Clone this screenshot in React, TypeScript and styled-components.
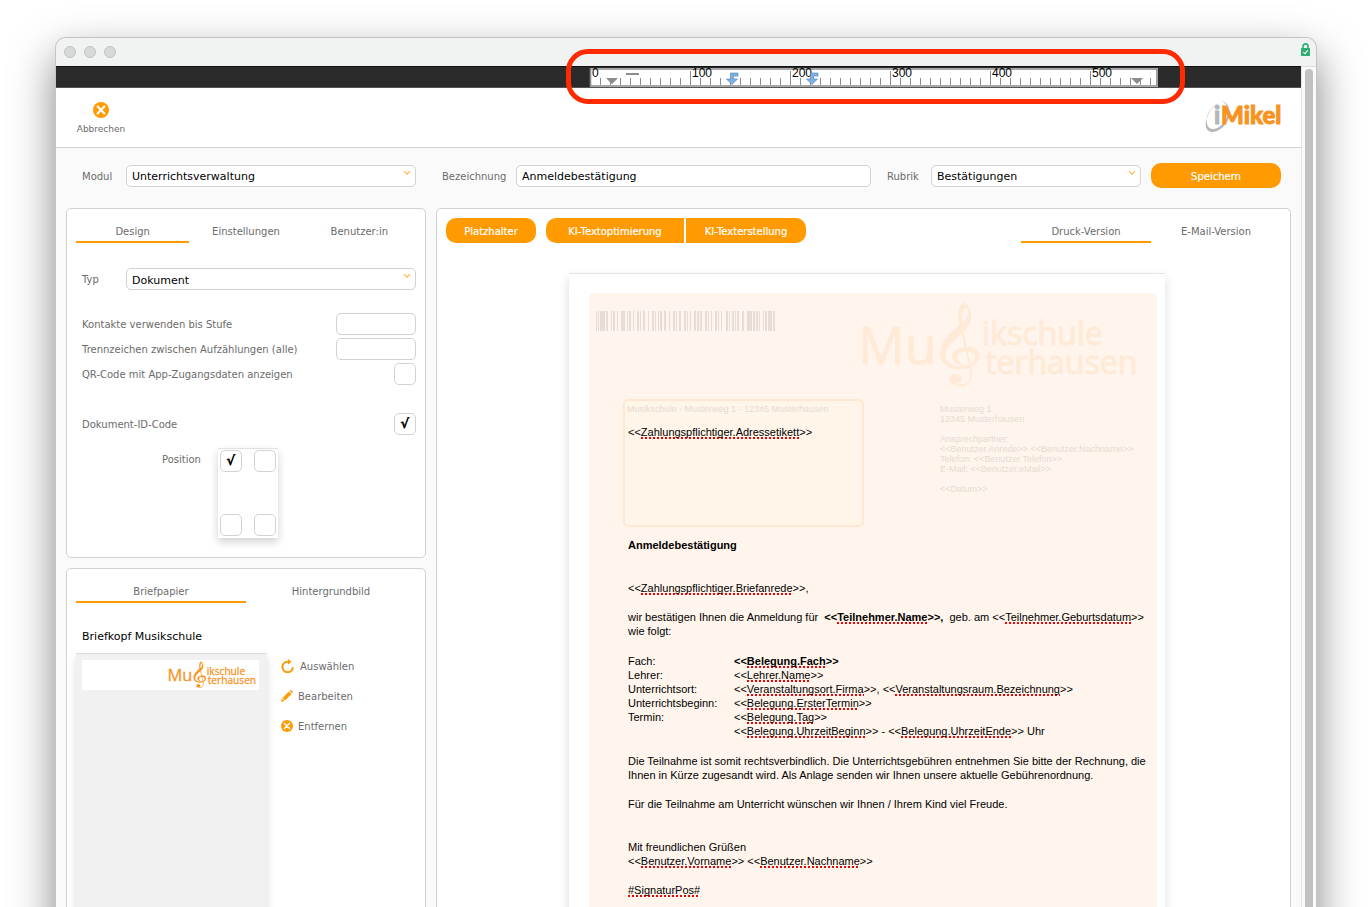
import React from "react";
import styled, { createGlobalStyle, css } from "styled-components";

const ORANGE = "#ff9a00";
const LINE = "#d2d2d2";
const UI_FONT = `"DejaVu Sans", Verdana, sans-serif`;
const DOC_FONT = `"Liberation Sans", Arial, sans-serif`;

const GlobalStyle = createGlobalStyle`
  *, *::before, *::after { box-sizing: border-box; }
  body { margin: 0; background: #fff; color: #6b6b6b; font: 10px/14px ${UI_FONT}; }
  button, input, select { font-family: inherit; margin: 0; }
`;

const Desktop = styled.div`
  height: 100vh;
  overflow: hidden;
  padding: 38px 56px 0;
`;

const Window = styled.div`
  height: 100vh;
  display: flex;
  flex-direction: column;
  border-radius: 10px 10px 0 0;
  background: #fafafa;
  box-shadow: 0 0 0 1px #c4c4c4, 0 18px 44px rgba(0, 0, 0, 0.5);
`;

const TitleBar = styled.header`
  height: 28px;
  flex: none;
  display: flex;
  align-items: center;
  justify-content: space-between;
  padding: 0 6px 0 8px;
  border-radius: 10px 10px 0 0;
  background: #f0f3f2;
`;

const Lights = styled.div`
  display: flex;
  gap: 8px;
`;

const Light = styled.span`
  width: 12px;
  height: 12px;
  border-radius: 50%;
  border: 1px solid #c3c5c4;
  background: #d7d9d8;
`;

const LockBadge = styled.span`
  display: flex;
  padding-bottom: 6px;
`;

const WindowBody = styled.div`
  flex: 1;
  min-height: 0;
  display: flex;
`;

const Content = styled.div`
  flex: 1;
  min-width: 0;
  display: flex;
  flex-direction: column;
`;

const ScrollTrack = styled.div`
  width: 15px;
  padding: 2px 3px 0 3px;
  border-left: 1px solid #e4e4e4;
  border-top: 1px solid #dcdcdc;
  background: #fafafa;
`;

const ScrollThumb = styled.div`
  width: 8px;
  height: 100%;
  border-radius: 4px;
  background: #c1c1c1;
`;

const RulerBar = styled.div`
  height: 22px;
  flex: none;
  padding: 1px 0 0 534px;
  border-top: 1px solid #111;
  border-bottom: 1px solid #555;
  background: #2b2b2b;
`;

const RulerHolder = styled.div`
  position: relative;
  width: 568px;
  height: 19px;

  svg { overflow: visible; }
`;

const Highlight = styled.div`
  position: absolute;
  inset: -19px -27px -17px -24px;
  border: 5px solid #ff2a00;
  border-radius: 22px;
`;

const AppHeader = styled.div`
  flex: none;
  height: 60px;
  display: flex;
  align-items: center;
  justify-content: space-between;
  padding: 0 18px 0 16px;
  border-bottom: 1px solid ${LINE};
  background: #fff;
`;

const CancelButton = styled.button`
  display: flex;
  flex-direction: column;
  align-items: center;
  gap: 4px;
  width: 58px;
  padding: 2px 0 0;
  border: 0;
  background: none;
  color: #6b6b6b;
  font-size: 9px;
  line-height: 14px;
`;

const FormBar = styled.div`
  flex: none;
  display: flex;
  align-items: center;
  padding: 15px 20px 20px 26px;
`;

const Label = styled.label<{ $width?: number }>`
  flex: none;
  width: ${(p) => (p.$width ? `${p.$width}px` : "auto")};
  padding-top: 2px;
`;

const field = css`
  height: 22px;
  border: 1px solid ${LINE};
  border-radius: 5px;
  background: #fff;
  color: #000;
  font-size: 11px;
  outline: none;
`;

const TextInput = styled.input`
  ${field}
  min-width: 0;
  flex: 1;
  padding: 2px 5px 0;
`;

const SmallInput = styled.input`
  ${field}
  width: 80px;
  padding: 2px 5px 0;
`;

const SelectHolder = styled.span<{ $width?: number }>`
  position: relative;
  display: flex;
  flex: ${(p) => (p.$width ? "none" : "1")};
  width: ${(p) => (p.$width ? `${p.$width}px` : "auto")};

  select {
    ${field}
    width: 100%;
    appearance: none;
    padding: 2px 20px 0 5px;
  }

  svg {
    position: absolute;
    top: 5px;
    right: 5px;
    pointer-events: none;
  }
`;

const Spacer = styled.span<{ $width: number }>`
  flex: none;
  width: ${(p) => p.$width}px;
`;

const OrangeButton = styled.button<{ $width: number; $side?: "left" | "right" }>`
  width: ${(p) => p.$width}px;
  height: 25px;
  padding: 1px 0 0;
  border: 0;
  border-radius: ${(p) =>
    p.$side === "left" ? "10px 0 0 10px" : p.$side === "right" ? "0 10px 10px 0" : "10px"};
  background: ${ORANGE};
  color: #fff;
  font-size: 10px;
  -webkit-text-stroke: 0.2px #fff;
`;

const Main = styled.main`
  flex: 1;
  min-height: 0;
  display: flex;
  gap: 10px;
  padding: 0 10px;
`;

const Sidebar = styled.div`
  flex: none;
  width: 360px;
  display: flex;
  flex-direction: column;
  gap: 10px;
`;

const Panel = styled.section<{ $grow?: boolean }>`
  flex: ${(p) => (p.$grow ? "1" : "none")};
  min-width: 0;
  padding: 9px;
  border: 1px solid ${LINE};
  border-radius: 5px;
  background: #fff;
`;

const Tabs = styled.div<{ $width?: number }>`
  display: flex;
  width: ${(p) => (p.$width ? `${p.$width}px` : "auto")};
`;

const Tab = styled.button<{ $active?: boolean }>`
  flex: 1 1 0;
  height: 25px;
  padding: 4px 0 0;
  border: 0;
  border-bottom: 2px solid ${(p) => (p.$active ? ORANGE : "transparent")};
  background: none;
  color: #6b6b6b;
  font-size: 10px;
`;

const Settings = styled.div`
  display: flex;
  flex-direction: column;
  gap: 3px;
  padding: 25px 0 10px 6px;
`;

const SettingRow = styled.div<{ $after?: number }>`
  display: flex;
  align-items: center;
  justify-content: space-between;
  min-height: 22px;
  margin-bottom: ${(p) => p.$after ?? 0}px;
`;

const PositionRow = styled.div`
  display: flex;
  gap: 17px;
  padding: 10px 0 0 80px;
`;

const PositionLabel = styled.span`
  padding-top: 5px;
`;

const PositionPage = styled.div`
  width: 60px;
  height: 90px;
  display: flex;
  flex-wrap: wrap;
  align-content: space-between;
  justify-content: space-between;
  padding: 1px 2px 2px;
  border-top: 1px solid #e0e0e0;
  background: #fff;
  box-shadow: 0 4px 8px rgba(0, 0, 0, 0.18);
`;

const Check = styled.input`
  ${field}
  appearance: none;
  display: grid;
  place-items: center;
  width: 22px;

  &:checked::after {
    content: "√";
    font: 13px/18px ${UI_FONT};
    -webkit-text-stroke: 0.7px #000;
    color: #000;
  }
`;

const PaperTitle = styled.h2`
  margin: 27px 6px 9px;
  color: #000;
  font-size: 11px;
  line-height: 14px;
  font-weight: 400;
`;

const PaperRow = styled.div`
  display: flex;
  gap: 14px;
`;

const Preview = styled.div`
  width: 191px;
  height: 360px;
  padding: 6px 8px 6px 6px;
  border-top: 1px solid #dcdcdc;
  background: #f1f1f1;
  box-shadow: 0 4px 8px rgba(0, 0, 0, 0.14);
`;

const Letterhead = styled.div`
  display: flex;
  align-items: flex-end;
  justify-content: flex-end;
  height: 30px;
  padding-right: 2px;
  background: #fff;
`;

const Actions = styled.div`
  display: flex;
  flex-direction: column;
  gap: 16px;
  padding-top: 6px;
`;

const Action = styled.button`
  display: flex;
  align-items: center;
  gap: 5px;
  height: 14px;
  padding: 0;
  border: 0;
  background: none;
  color: #6b6b6b;
  font-size: 10px;
`;

const EditorBar = styled.div`
  display: flex;
`;

const Push = styled.span`
  flex: 1;
`;

const Sheet = styled.article`
  width: 596px;
  margin: 30px 0 0 123px;
  padding: 19px 8px 0 20px;
  border-top: 1px solid #e4e4e4;
  background: #fff;
  box-shadow: 0 5px 10px rgba(0, 0, 0, 0.14);
`;

const Canvas = styled.div`
  height: 700px;
  border-radius: 5px;
  background: #fff5ec;
  color: #000;
  font: 11px/14px ${DOC_FONT};
`;

const LetterTop = styled.div`
  display: flex;
  justify-content: space-between;
  height: 106px;
  padding: 5px 17px 0 7px;
`;

const BarcodeHolder = styled.div`
  padding-top: 13px;
`;

const AddressRow = styled.div`
  display: flex;
  gap: 76px;
  padding-left: 34px;
`;

const AddressBox = styled.div`
  width: 241px;
  height: 128px;
  padding: 3px 3px 0 2px;
  border: 2px solid #ffe8d3;
  border-radius: 5px;
  background: #fff5e9;
`;

const Faint = styled.div`
  color: #e6dbd1;
  font-size: 9px;
  line-height: 10px;
  white-space: pre;
`;

const SenderBlock = styled.div`
  padding-top: 5px;
`;

const AddressText = styled.p`
  margin: 11px 0 0 1px;
`;

const Letter = styled.div`
  padding: 11px 0 0 39px;
  white-space: nowrap;
`;

const Subject = styled.h1`
  margin: 0 0 29px;
  font-size: 11px;
  line-height: 14px;
`;

const Para = styled.p<{ $after?: number }>`
  margin: 0 0 ${(p) => p.$after ?? 15}px;
`;

const Details = styled.table`
  margin: 0 0 16px;
  border-collapse: collapse;

  th, td {
    padding: 0;
    text-align: left;
    font-weight: 400;
  }

  th { width: 106px; }
`;

const Misspelt = styled.span`
  padding-bottom: 1px;
  background: repeating-linear-gradient(90deg, #f00000 0 2px, transparent 2px 4px) left bottom / 100% 2px no-repeat;
`;

/* A merge field: only the name between the angle brackets is marked by the spell check. */
const Field = ({ name }: { name: string }) => (
  <>
    {"<<"}
    <Misspelt>{name}</Misspelt>
    {">>"}
  </>
);

const CircleX = ({ size }: { size: number }) => (
  <svg width={size} height={size} viewBox="0 0 16 16" aria-hidden="true">
    <circle cx="8" cy="8" r="8" fill={ORANGE} />
    <path d="M4.6 4.6 11.4 11.4M11.4 4.6 4.6 11.4" stroke="#fff" strokeWidth="2.1" strokeLinecap="round" />
  </svg>
);

const Chevron = () => (
  <svg width="8" height="6" viewBox="0 0 8 6" aria-hidden="true">
    <path d="M1 1.2 4 4.2 7 1.2" fill="none" stroke="#ffb547" strokeWidth="1.2" />
  </svg>
);

const LockIcon = () => (
  <svg width="9" height="13" viewBox="0 0 9 13" aria-hidden="true">
    <path d="M2 6V3.4a2.5 2.5 0 0 1 5 0V6" fill="none" stroke="#2fae73" strokeWidth="1.6" />
    <rect y="5" width="9" height="8" rx="0.6" fill="#2fae73" />
    <path d="M2.4 9.2 4 10.8 6.8 7.4" fill="none" stroke="#fff" strokeWidth="1.1" />
  </svg>
);

const ReloadIcon = () => (
  <svg width="14" height="14" viewBox="0 0 14 14" aria-hidden="true">
    <path d="M11.8 8.2A5.2 5.2 0 1 1 6.6 2.8H8" fill="none" stroke={ORANGE} strokeWidth="2.1" />
    <path d="M7 0 10.6 2.9 7 5.6Z" fill={ORANGE} />
  </svg>
);

const PencilIcon = () => (
  <svg width="12" height="12" viewBox="0 0 12 12" aria-hidden="true">
    <path d="M0 12 .9 8.6 3.4 11.1ZM1.5 8 8 1.5 10.5 4 4 10.5ZM8.7.9 9.3.3Q9.8-.1 10.3.3L11.7 1.7Q12.1 2.2 11.7 2.7L11.1 3.3Z" fill={ORANGE} />
  </svg>
);

const AppLogo = () => (
  <svg width="78" height="36" viewBox="0 0 78 36" role="img" aria-label="iMikel">
    <path d="M17 .5C25 4 27 13 22 22C18 28 12 32.500 6.500 32C0 31 0 24 1.500 18C1.500 25 3 29 8 29C14 29 19.500 23 22 17C24.500 10 22 4 17 .5Z" fill="#b4b6b9" />
    <path d="M1.500 18C3 11 8 5 14 3C8 6 4 11 2.300 18Z" fill="#d5d6d8" />
    <g fontFamily="Lato" fontWeight="900" fontSize="24" strokeWidth="0.9">
      <text x="9" y="24" fill="#b4b6b9" stroke="#b4b6b9">i</text>
      <text x="16" y="24" fill="#f7931e" stroke="#f7931e">Mikel</text>
    </g>
  </svg>
);

const SchoolLogo = ({ width, color }: { width: number; color: string }) => (
  <svg width={width} height={(width * 94) / 280} viewBox="0 0 280 94" role="img" aria-label="Musikschule Musterhausen">
    <g fill={color} stroke={color} strokeWidth="0.8" fontFamily="Open Sans, Noto Sans, sans-serif">
      <text x="-2" y="66" fontSize="52">Mu</text>
      <text x="122" y="47" fontSize="32">ikschule</text>
      <text x="125" y="76" fontSize="32">terhausen</text>
    </g>
    <g transform="translate(72 0) scale(0.3333)">
      <path
        fill={color}
        stroke={color}
        strokeWidth="3"
        fillRule="evenodd"
        d="M97 16C84 18 76 40 83 82C50 108 26 134 26 166C26 196 50 214 82 212C118 212 141 196 141 174C141 152 122 144 102 148C76 151 60 162 62 178C64 192 76 200 92 201C78 194 74 186 76 176C78 164 90 159 104 159C122 159 130 166 130 178C130 197 110 206 84 206C58 206 40 192 39 170C38 146 64 128 90 104C110 86 119 70 116 46C113 28 104 16 97 16ZM103 27C110 30 111 40 107 52C104 65 98 72 90 78C86 60 88 34 103 27Z"
      />
      <path d="M86 76 116 216C121 248 106 263 84 262C70 261 60 256 55 246" fill="none" stroke={color} strokeWidth="6" />
      <ellipse cx="70" cy="242" rx="19" ry="15" fill={color} />
    </g>
  </svg>
);

const BARS: Array<[number, number]> = [
  [0, 1], [2, 1], [4, 1], [5, 4], [10, 2], [15, 1], [17, 2], [21, 1], [25, 4], [31, 1], [33, 2], [37, 1],
  [41, 2], [44, 1], [47, 2], [52, 1], [56, 2], [59, 1], [62, 1], [64, 2], [68, 2], [73, 1], [77, 2], [80, 1],
  [83, 2], [88, 2], [91, 1], [94, 1], [98, 2], [101, 2], [104, 2], [109, 2], [112, 1], [115, 1], [119, 2],
  [122, 1], [125, 1], [130, 2], [133, 1], [136, 2], [139, 1], [141, 2], [146, 2], [151, 2], [153, 3], [157, 2],
  [160, 2], [163, 1], [167, 1], [169, 2], [172, 4], [177, 2],
];

const Barcode = () => (
  <svg width="180" height="20" viewBox="0 0 180 20" role="img" aria-label="Dokument-ID-Code">
    {BARS.map(([x, w]) => (
      <rect key={x} x={x} width={w} height="20" fill="#e8ddd4" />
    ))}
  </svg>
);

const TabStop = ({ x }: { x: number }) => (
  <path
    transform={`translate(${x} 4)`}
    d="M-1.500 1H6V4H1.500V7H5.500L0 12.500-5.500 7H-1.500Z"
    fill="#7fb0e4"
    stroke="#4c7fb8"
    strokeWidth="0.6"
  />
);

const Ruler = () => (
  <svg width="568" height="19" viewBox="0 0 568 19" role="img" aria-label="Lineal">
    <rect width="568" height="19" fill="#fff" />
    <path d="M0 1H567V18H0.500V1" fill="none" stroke="#8a8a8a" strokeWidth="1.600" />
    {Array.from({ length: 57 }, (_, i) => {
      const major = i % 10 === 0;
      return <rect key={i} x={i * 10} y={major ? 3 : 10} width="1" height={major ? 14 : 7} fill="#8c8c8c" />;
    })}
    {[0, 100, 200, 300, 400, 500].map((n) => (
      <text key={n} x={n + 2} y="9" fontFamily="Liberation Sans" fontSize="12" fill="#000">
        {n}
      </text>
    ))}
    <path d="M16 10H28L22 16Z M541 10H553L547 16Z M36 5H49V7H36Z" fill="#8c8c8c" />
    <TabStop x={142} />
    <TabStop x={222} />
  </svg>
);

const Select = ({ id, value, width }: { id: string; value: string; width?: number }) => (
  <SelectHolder $width={width}>
    <select id={id} defaultValue={value}>
      <option>{value}</option>
    </select>
    <Chevron />
  </SelectHolder>
);

const DETAILS: Array<[string, React.ReactNode]> = [
  ["Fach:", <b><Field name="Belegung.Fach" /></b>],
  ["Lehrer:", <Field name="Lehrer.Name" />],
  ["Unterrichtsort:", <><Field name="Veranstaltungsort.Firma" />, <Field name="Veranstaltungsraum.Bezeichnung" /></>],
  ["Unterrichtsbeginn:", <Field name="Belegung.ErsterTermin" />],
  ["Termin:", <Field name="Belegung.Tag" />],
  ["", <><Field name="Belegung.UhrzeitBeginn" /> - <Field name="Belegung.UhrzeitEnde" /> Uhr</>],
];

const SENDER = `Musterweg 1
12345 Musterhausen

Ansprechpartner:
<<Benutzer.Anrede>> <<Benutzer.Nachname>>
Telefon: <<Benutzer.Telefon>>
E-Mail: <<Benutzer.eMail>>

<<Datum>>`;

const LetterSheet = () => (
  <Sheet>
    <Canvas>
      <LetterTop>
        <BarcodeHolder>
          <Barcode />
        </BarcodeHolder>
        <SchoolLogo width={280} color="#ffe9d7" />
      </LetterTop>
      <AddressRow>
        <AddressBox>
          <Faint>Musikschule - Musterweg 1 - 12345 Musterhausen</Faint>
          <AddressText>
            <Field name="Zahlungspflichtiger.Adressetikett" />
          </AddressText>
        </AddressBox>
        <SenderBlock>
          <Faint>{SENDER}</Faint>
        </SenderBlock>
      </AddressRow>
      <Letter>
        <Subject>Anmeldebestätigung</Subject>
        <Para>
          <Field name="Zahlungspflichtiger.Briefanrede" />,
        </Para>
        <Para $after={16}>
          wir bestätigen Ihnen die Anmeldung für&nbsp;{" "}
          <b>
            <Field name="Teilnehmer.Name" />,
          </b>
          &nbsp; geb. am <Field name="Teilnehmer.Geburtsdatum" />
          <br />
          wie folgt:
        </Para>
        <Details>
          <tbody>
            {DETAILS.map(([label, value], i) => (
              <tr key={i}>
                <th scope="row">{label}</th>
                <td>{value}</td>
              </tr>
            ))}
          </tbody>
        </Details>
        <Para>
          Die Teilnahme ist somit rechtsverbindlich. Die Unterrichtsgebühren entnehmen Sie bitte der Rechnung, die
          <br />
          Ihnen in Kürze zugesandt wird. Als Anlage senden wir Ihnen unsere aktuelle Gebührenordnung.
        </Para>
        <Para $after={29}>Für die Teilnahme am Unterricht wünschen wir Ihnen / Ihrem Kind viel Freude.</Para>
        <Para>
          Mit freundlichen Grüßen
          <br />
          <Field name="Benutzer.Vorname" /> <Field name="Benutzer.Nachname" />
        </Para>
        <Para>
          <Misspelt>#SignaturPos#</Misspelt>
        </Para>
      </Letter>
    </Canvas>
  </Sheet>
);

export default function App() {
  return (
    <Desktop>
      <GlobalStyle />
      <Window>
        <TitleBar>
          <Lights>
            <Light />
            <Light />
            <Light />
          </Lights>
          <LockBadge>
            <LockIcon />
          </LockBadge>
        </TitleBar>
        <WindowBody>
          <Content>
            <RulerBar>
              <RulerHolder>
                <Ruler />
                <Highlight />
              </RulerHolder>
            </RulerBar>
            <AppHeader>
              <CancelButton type="button">
                <CircleX size={16} />
                Abbrechen
              </CancelButton>
              <AppLogo />
            </AppHeader>
            <FormBar>
              <Label htmlFor="modul" $width={44}>Modul</Label>
              <Select id="modul" value="Unterrichtsverwaltung" width={290} />
              <Spacer $width={26} />
              <Label htmlFor="bezeichnung" $width={74}>Bezeichnung</Label>
              <TextInput id="bezeichnung" defaultValue="Anmeldebestätigung" />
              <Spacer $width={16} />
              <Label htmlFor="rubrik" $width={44}>Rubrik</Label>
              <Select id="rubrik" value="Bestätigungen" width={210} />
              <Spacer $width={10} />
              <OrangeButton type="button" $width={130}>Speichern</OrangeButton>
            </FormBar>
            <Main>
              <Sidebar>
                <Panel>
                  <Tabs role="tablist">
                    <Tab role="tab" aria-selected $active>Design</Tab>
                    <Tab role="tab">Einstellungen</Tab>
                    <Tab role="tab">Benutzer:in</Tab>
                  </Tabs>
                  <Settings>
                    <SettingRow $after={20}>
                      <Label htmlFor="typ" $width={44}>Typ</Label>
                      <Select id="typ" value="Dokument" />
                    </SettingRow>
                    <SettingRow>
                      <Label htmlFor="stufe">Kontakte verwenden bis Stufe</Label>
                      <SmallInput id="stufe" />
                    </SettingRow>
                    <SettingRow>
                      <Label htmlFor="trenn">Trennzeichen zwischen Aufzählungen (alle)</Label>
                      <SmallInput id="trenn" />
                    </SettingRow>
                    <SettingRow $after={25}>
                      <Label htmlFor="qr">QR-Code mit App-Zugangsdaten anzeigen</Label>
                      <Check type="checkbox" id="qr" />
                    </SettingRow>
                    <SettingRow>
                      <Label htmlFor="docid">Dokument-ID-Code</Label>
                      <Check type="checkbox" id="docid" defaultChecked />
                    </SettingRow>
                    <PositionRow>
                      <PositionLabel>Position</PositionLabel>
                      <PositionPage>
                        <Check type="checkbox" aria-label="Oben links" defaultChecked />
                        <Check type="checkbox" aria-label="Oben rechts" />
                        <Check type="checkbox" aria-label="Unten links" />
                        <Check type="checkbox" aria-label="Unten rechts" />
                      </PositionPage>
                    </PositionRow>
                  </Settings>
                </Panel>
                <Panel $grow>
                  <Tabs role="tablist">
                    <Tab role="tab" aria-selected $active>Briefpapier</Tab>
                    <Tab role="tab">Hintergrundbild</Tab>
                  </Tabs>
                  <PaperTitle>Briefkopf Musikschule</PaperTitle>
                  <PaperRow>
                    <Preview>
                      <Letterhead>
                        <SchoolLogo width={89} color="#f7931e" />
                      </Letterhead>
                    </Preview>
                    <Actions>
                      <Action type="button">
                        <ReloadIcon />
                        Auswählen
                      </Action>
                      <Action type="button">
                        <PencilIcon />
                        Bearbeiten
                      </Action>
                      <Action type="button">
                        <CircleX size={12} />
                        Entfernen
                      </Action>
                    </Actions>
                  </PaperRow>
                </Panel>
              </Sidebar>
              <Panel $grow>
                <EditorBar>
                  <OrangeButton type="button" $width={90}>Platzhalter</OrangeButton>
                  <Spacer $width={10} />
                  <OrangeButton type="button" $width={138} $side="left">KI-Textoptimierung</OrangeButton>
                  <Spacer $width={2} />
                  <OrangeButton type="button" $width={120} $side="right">KI-Texterstellung</OrangeButton>
                  <Push />
                  <Tabs role="tablist" $width={260}>
                    <Tab role="tab" aria-selected $active>Druck-Version</Tab>
                    <Tab role="tab">E-Mail-Version</Tab>
                  </Tabs>
                </EditorBar>
                <LetterSheet />
              </Panel>
            </Main>
          </Content>
          <ScrollTrack>
            <ScrollThumb />
          </ScrollTrack>
        </WindowBody>
      </Window>
    </Desktop>
  );
}
